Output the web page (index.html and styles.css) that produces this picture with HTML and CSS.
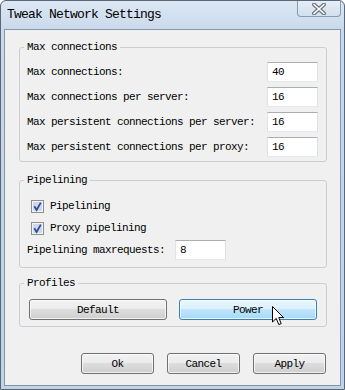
FILE: index.html
```html
<!DOCTYPE html>
<html lang="en">

<head>
  <meta charset="utf-8" />
  <title>Tweak Network Settings</title>
  <link rel="stylesheet" href="styles.css">
</head>

<body>
  <div class="window">
    <!-- Title bar -->
    <div class="titlebar">
      <span class="title">Tweak Network Settings</span>
      <button class="close-btn" aria-label="Close">
        <svg width="14" height="12" viewBox="0 0 14 12">
          <path d="M2 1.5 L12 10.5 M12 1.5 L2 10.5" stroke="#6d7886" stroke-width="4" stroke-linecap="round" fill="none" />
          <path d="M2 1.5 L12 10.5 M12 1.5 L2 10.5" stroke="#ffffff" stroke-width="1.6" stroke-linecap="round" fill="none" />
        </svg>
      </button>
    </div>

    <div class="client">
      <fieldset class="group group-max">
        <legend>Max connections</legend>
        <div class="field-row">
          <label>Max connections:</label>
          <input type="text" value="40">
        </div>
        <div class="field-row">
          <label>Max connections per server:</label>
          <input type="text" value="16">
        </div>
        <div class="field-row">
          <label>Max persistent connections per server:</label>
          <input type="text" value="16">
        </div>
        <div class="field-row">
          <label>Max persistent connections per proxy:</label>
          <input type="text" value="16">
        </div>
      </fieldset>

      <fieldset class="group group-pipe">
        <legend>Pipelining</legend>
        <div class="check-row">
          <span class="check">
            <svg width="13" height="13" viewBox="0 0 13 13">
              <rect x="0.5" y="0.5" width="12" height="12" fill="#f4f4f4" stroke="#8e8f8f" />
              <rect x="2" y="2" width="9" height="9" fill="#cfd8e4" />
              <path d="M3.3 6.2 L5.6 10 L9.8 2.6" stroke="#2c4da3" stroke-width="1.8" fill="none" />
            </svg>
          </span>
          <span>Pipelining</span>
        </div>
        <div class="check-row">
          <span class="check">
            <svg width="13" height="13" viewBox="0 0 13 13">
              <rect x="0.5" y="0.5" width="12" height="12" fill="#f4f4f4" stroke="#8e8f8f" />
              <rect x="2" y="2" width="9" height="9" fill="#cfd8e4" />
              <path d="M3.3 6.2 L5.6 10 L9.8 2.6" stroke="#2c4da3" stroke-width="1.8" fill="none" />
            </svg>
          </span>
          <span>Proxy pipelining</span>
        </div>
        <div class="inline-row">
          <label>Pipelining maxrequests:</label>
          <input type="text" value="8">
        </div>
      </fieldset>

      <fieldset class="group group-profiles">
        <legend>Profiles</legend>
        <div class="profile-buttons">
          <button class="btn">Default</button>
          <button class="btn btn-hover">Power</button>
        </div>
      </fieldset>

      <div class="dialog-buttons">
        <button class="btn btn-dialog">Ok</button>
        <button class="btn btn-dialog">Cancel</button>
        <button class="btn btn-dialog">Apply</button>
      </div>
    </div>

    <!-- Mouse pointer over the Power button -->
    <svg class="cursor" width="13" height="20" viewBox="0 0 13 20">
      <path d="M0.5 0.5 L0.5 16 L4.2 12.4 L6.8 18.6 L9.2 17.6 L6.7 11.6 L11.6 11.6 Z" fill="#ffffff" stroke="#000000" stroke-width="1" stroke-linejoin="miter" />
    </svg>
  </div>
</body>

</html>
```

FILE: styles.css
```css
/* Global Reset */
* {
  margin: 0;
  padding: 0;
  box-sizing: border-box;
}

body {
  font-family: 'Liberation Mono', 'DejaVu Sans Mono', monospace;
  font-size: 11px;
  letter-spacing: -0.6px;
  color: #000;
  background-color: #ffffff;
}

/* Window frame */
.window {
  position: relative;
  width: 345px;
  height: 390px;
  border: 1px solid #58687a;
  border-radius: 6px 6px 0 0;
  padding: 0 3px 3px 3px;
  background: linear-gradient(180deg, #dce7f4 0%, #c9d8ea 30px, #c2d3e7 100%);
  display: flex;
  flex-direction: column;
}

.titlebar {
  height: 28px;
  display: flex;
  justify-content: space-between;
  align-items: flex-start;
}

.title {
  align-self: center;
  padding: 0 0 2px 3px;
  font-size: 13px;
  letter-spacing: -0.8px;
  color: #000;
}

.close-btn {
  width: 44px;
  height: 16px;
  border: 1px solid #8a9bb0;
  border-top: none;
  border-radius: 0 0 4px 4px;
  background: linear-gradient(180deg, #e6eef7, #d3e0ee);
  display: flex;
  align-items: center;
  justify-content: center;
}

/* Client area */
.client {
  flex: 1;
  background-color: #f0f0f0;
  border: 1px solid #8496aa;
  padding: 10px 13px 11px 14px;
  display: flex;
  flex-direction: column;
}

.group {
  border: 1px solid #c9ced3;
  border-radius: 3px;
  min-width: 0;
}

.group legend {
  line-height: 14px;
  padding: 0 3px;
  margin-left: -3px;
}

.group-max {
  padding: 8px 8px 4px 7px;
  display: flex;
  flex-direction: column;
  gap: 5px;
}

.group-pipe {
  margin-top: 11px;
  padding: 9px 8px 7px 7px;
  display: flex;
  flex-direction: column;
  gap: 2px;
}

.group-profiles {
  margin-top: 8px;
  padding: 9px 9px 6px 9px;
}

.group-profiles legend {
  margin-left: -5px;
}

.field-row {
  height: 20px;
  display: flex;
  justify-content: space-between;
  align-items: center;
}

.check-row {
  height: 20px;
  display: flex;
  align-items: center;
  gap: 6px;
  padding-left: 4px;
}

.check {
  width: 13px;
  height: 13px;
  display: flex;
}

.inline-row {
  height: 20px;
  display: flex;
  align-items: center;
  gap: 10px;
}

input[type="text"] {
  width: 51px;
  height: 20px;
  padding: 0 4px;
  font-family: inherit;
  font-size: 11px;
  letter-spacing: -0.6px;
  color: #000;
  background-color: #ffffff;
  border: 1px solid;
  border-color: #abadb3 #dbdfe6 #e3e9ef #e2e3ea;
  outline: none;
}

/* Buttons */
.btn {
  height: 21px;
  font-family: inherit;
  font-size: 11px;
  letter-spacing: -0.6px;
  color: #000;
  border: 1px solid #707070;
  border-radius: 3px;
  background: linear-gradient(180deg, #f2f2f2 0%, #ebebeb 50%, #dddddd 50%, #cfcfcf 100%);
  box-shadow: inset 0 0 0 1px rgba(255, 255, 255, 0.7);
}

.btn-hover {
  border-color: #3c7fb1;
  background: linear-gradient(180deg, #eaf6fd 0%, #d9f0fc 50%, #bee6fd 50%, #a7d9f5 100%);
}

.profile-buttons {
  display: flex;
  gap: 12px;
}

.profile-buttons .btn {
  flex: 1;
}

.dialog-buttons {
  margin-top: 26px;
  display: flex;
  justify-content: flex-end;
  gap: 13px;
  padding-right: 1px;
}

.btn-dialog {
  width: 73px;
}

/* Pointer overlay */
.cursor {
  position: absolute;
  left: 271px;
  top: 305px;
}
```
